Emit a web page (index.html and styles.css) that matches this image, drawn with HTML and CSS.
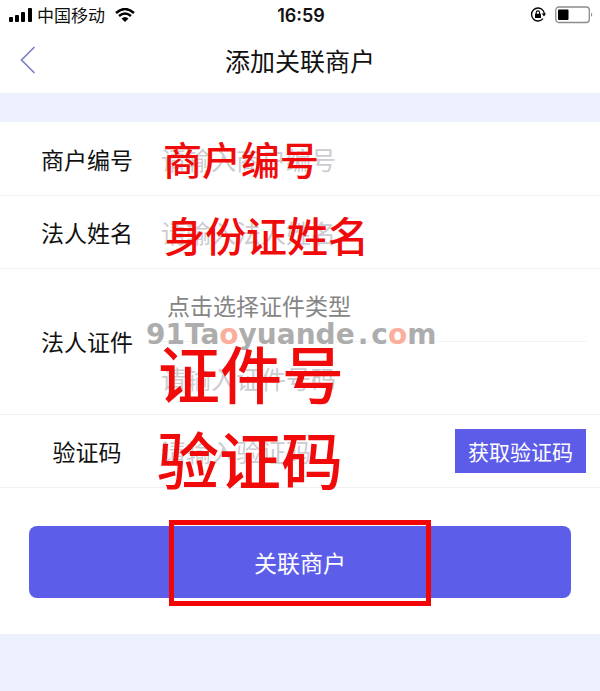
FILE: index.html
```
<!DOCTYPE html>
<html lang="zh-CN">
<head>
  <meta charset="UTF-8">
  <meta name="viewport" content="width=device-width, initial-scale=1.0">
  <title>添加关联商户</title>
  <link rel="stylesheet" href="styles.css">
</head>
<body>
  <div class="status-bar">
    <div class="status-left">
      <svg class="signal" width="24" height="16" viewBox="0 0 24 16">
        <rect x="0" y="10" width="4" height="5" rx="1"/>
        <rect x="6" y="8" width="4" height="7" rx="1"/>
        <rect x="12" y="5" width="4" height="10" rx="1"/>
        <rect x="19" y="1" width="4" height="14" rx="1"/>
      </svg>
      <span class="carrier">中国移动</span>
      <svg class="wifi" width="20" height="14" viewBox="0 0 20 14">
        <path d="M1 5Q10-3 19 5M4 8Q10 3 16 8" fill="none" stroke="#000" stroke-width="2.4"/>
        <path d="M6.5 10.5Q10 7.5 13.5 10.5L10 14Z"/>
      </svg>
    </div>
    <span class="time">16:59</span>
    <div class="status-right">
      <svg class="rotation-lock" width="16" height="16" viewBox="0 0 16 16">
        <path d="M13 3.3A6.5 6.5 0 1 0 13 11.7M13 3.3A6.5 6.5 0 0 1 14.3 7" fill="none" stroke="#000" stroke-width="1.3"/>
        <path d="M11.7 6.5H16L14 9.5Z"/>
        <rect x="5" y="6.7" width="6" height="4.3" rx="0.5"/>
        <path d="M6.2 7V5.6a1.7 1.7 0 0 1 3.4 0V7" fill="none" stroke="#000" stroke-width="1.1"/>
      </svg>
      <svg class="battery" width="38" height="18" viewBox="0 0 38 18">
        <rect x="0.8" y="1" width="33.5" height="15.5" rx="3" fill="none" stroke="#8c8c8c" stroke-width="1.3"/>
        <rect x="3" y="3.5" width="10.5" height="10.5" rx="1"/>
        <path d="M36 6.5Q38.5 8.8 36 11Z" fill="#8c8c8c"/>
      </svg>
    </div>
  </div>

  <div class="header">
    <button type="button" class="back" aria-label="返回">
      <svg width="16" height="28" viewBox="0 0 16 28">
        <path d="M14.5 1L1.5 14L14.5 27" fill="none" stroke="#7b7bc4" stroke-width="1.6"/>
      </svg>
    </button>
    <h1>添加关联商户</h1>
  </div>

  <form class="merchant-form">
    <div class="row">
      <label for="merchant-no">商户编号</label>
      <div class="field">
        <input type="text" id="merchant-no" placeholder="请输入商户编号">
        <span class="note note-merchant">商户编号</span>
      </div>
    </div>

    <div class="row">
      <label for="legal-name">法人姓名</label>
      <div class="field">
        <input type="text" id="legal-name" placeholder="请输入法人姓名">
        <span class="note note-name">身份证姓名</span>
      </div>
    </div>

    <div class="row">
      <label for="id-number">法人证件</label>
      <div class="field">
        <select id="id-type" aria-label="证件类型">
          <option>点击选择证件类型</option>
        </select>
        <input type="text" id="id-number" class="id-number" placeholder="请输入证件号码">
        <span class="watermark">91Ta<b>o</b>yuande<span class="dot">.</span>c<b>o</b>m</span>
        <span class="note note-id">证件号</span>
      </div>
    </div>

    <div class="row">
      <label for="code">验证码</label>
      <div class="field">
        <input type="text" id="code" placeholder="请输入验证码">
        <span class="note note-code">验证码</span>
      </div>
      <button type="button" class="get-code">获取验证码</button>
    </div>

    <div class="submit-area">
      <button type="submit" class="submit">关联商户</button>
      <div class="highlight"></div>
    </div>
  </form>
</body>
</html>
```
FILE: styles.css
```
* {
  box-sizing: border-box;
}

body {
  margin: 0;
  min-height: 100vh;
  background-color: #edf1fe;
  color: #111;
  font-family: "Noto Sans CJK SC", sans-serif;
  font-weight: 400;
}

input,
select,
button {
  font-family: inherit;
  font-weight: inherit;
  margin: 0;
  padding: 0;
  border: none;
  border-radius: 0;
  background: none;
}

/* Status bar */
.status-bar {
  display: grid;
  grid-template-columns: 1fr auto 1fr;
  align-items: center;
  height: 30px;
  padding: 0 7px 0 9px;
  background-color: #fff;
}

.status-left,
.status-right {
  display: flex;
  align-items: center;
}

.status-right {
  justify-content: flex-end;
  gap: 9px;
}

.carrier {
  margin: 0 10px 0 4px;
  font-size: 17px;
  line-height: 30px;
}

.time {
  font-family: Inter, sans-serif;
  font-size: 18px;
  font-weight: 600;
}

/* Title bar */
.header {
  display: grid;
  grid-template-columns: 1fr auto 1fr;
  align-items: center;
  height: 63px;
  padding: 0 20px 4px;
  background-color: #fff;
}

.back {
  display: flex;
  justify-self: start;
  cursor: pointer;
}

h1 {
  margin: 0;
  font-size: 25px;
  font-weight: 400;
  line-height: 36px;
}

/* Form */
.merchant-form {
  margin-top: 29px;
  background-color: #fff;
}

.row {
  display: flex;
  align-items: center;
  padding: 0 14px 0 16px;
  box-shadow: 0 1px 0 #f0f0f4;
}

label {
  width: 142px;
  font-size: 23px;
  text-align: center;
}

.field {
  position: relative;
  flex: 1;
  min-width: 0;
}

.field input,
.field select {
  display: block;
  width: 100%;
  height: 73px;
  padding: 0 3px;
  font-size: 25px;
  color: #111;
  outline: none;
}

.field select {
  appearance: none;
  padding: 0 9px;
  font-size: 23px;
  color: #858585;
}

.field .id-number {
  border-top: 1px solid #f3f3f6;
}

.field input::placeholder {
  color: #ccccd0;
  opacity: 1;
}

.get-code {
  width: 131px;
  height: 44px;
  background-color: #5c5ce8;
  color: #fff;
  font-size: 21px;
  cursor: pointer;
}

.submit-area {
  position: relative;
  padding: 39px 29px 36px;
}

.submit {
  display: block;
  width: 100%;
  height: 72px;
  border-radius: 8px;
  background-color: #5c5eea;
  color: #fff;
  font-size: 23px;
  cursor: pointer;
}

/* Red notes lying over the fields */
.note {
  position: absolute;
  color: #f00a0a;
  font-weight: 500;
  line-height: 1;
  white-space: nowrap;
  pointer-events: none;
}

.note-merchant {
  top: 17px;
  left: 5px;
  font-size: 39px;
}

.note-name {
  top: 19px;
  left: 6px;
  font-size: 41px;
}

.note-id {
  top: 73px;
  left: 0;
  font-size: 62px;
}

.note-code {
  top: 13px;
  left: -1px;
  font-size: 62px;
}

.watermark {
  position: absolute;
  top: 50px;
  left: -12px;
  color: #adadad;
  font-family: "DejaVu Sans", sans-serif;
  font-size: 28px;
  font-weight: bold;
  line-height: 34px;
  pointer-events: none;
}

.watermark b {
  color: #fcae9c;
}

.watermark .dot {
  padding: 0 3px;
}

.highlight {
  position: absolute;
  top: 33px;
  left: 50%;
  width: 262px;
  height: 86px;
  border: 5px solid #f20505;
  transform: translateX(-50%);
  pointer-events: none;
}
```
